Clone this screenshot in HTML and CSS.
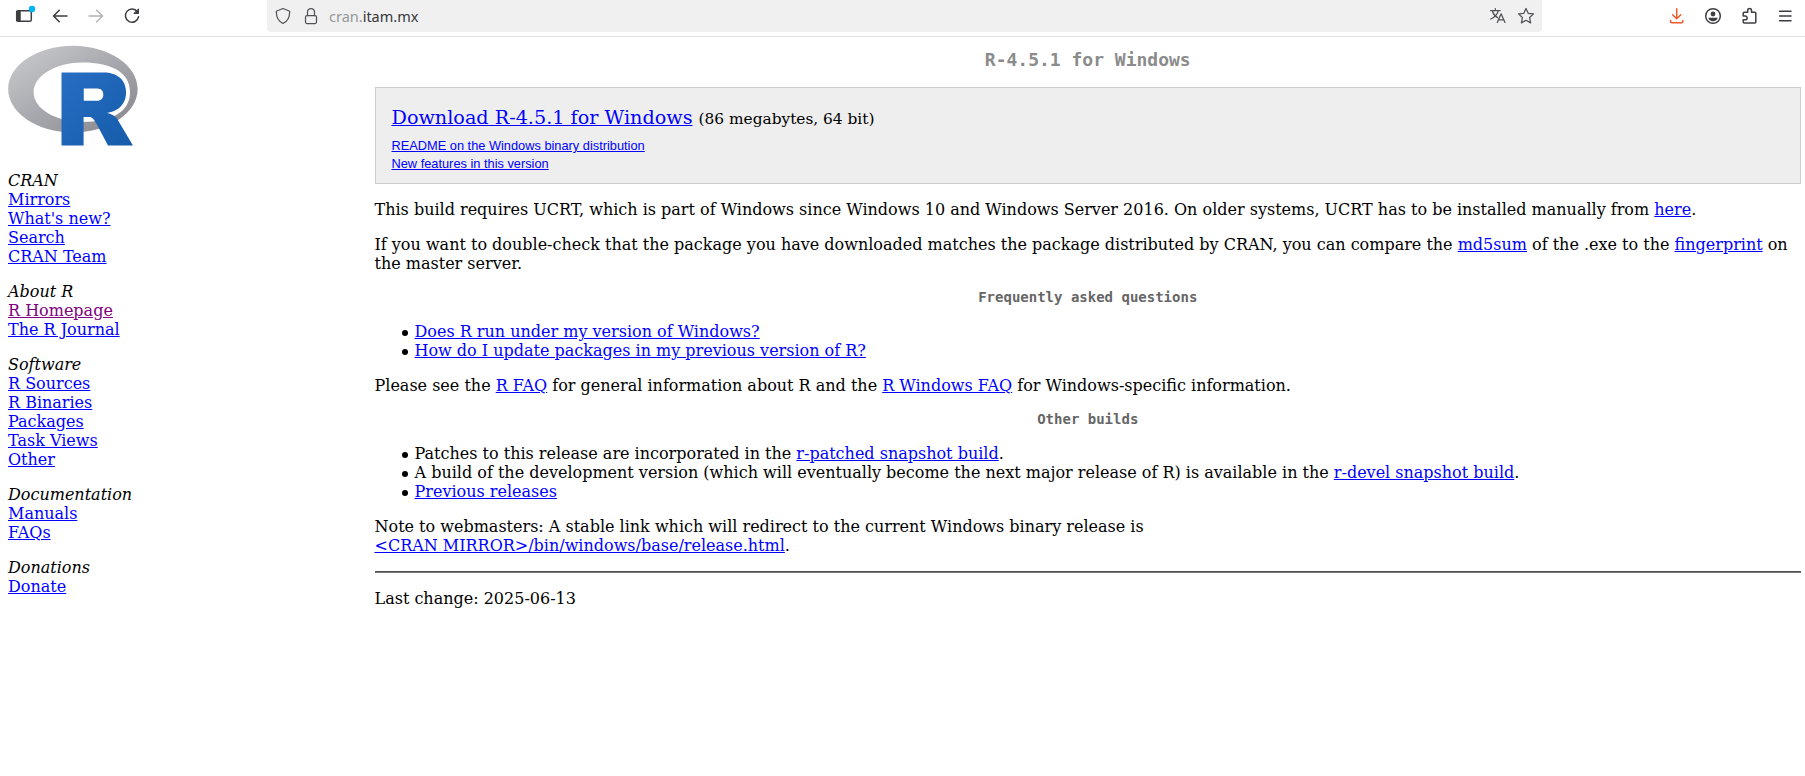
FILE: index.html
```html
<!DOCTYPE html>
<html lang="en">
<head>
<meta charset="utf-8">
<title>R-4.5.1 for Windows</title>
<link rel="stylesheet" href="styles.css">
</head>
<body>
<header class="toolbar">
  <div class="nav-buttons">
    <svg class="icon" viewBox="0 0 20 20"><rect x="2.7" y="4.7" width="14.6" height="10.6" rx="1.6"/><path class="solid" d="M3 5h3.2v10H3z"/><circle class="notice" cx="18" cy="3" r="3.2"/></svg>
    <svg class="icon" viewBox="0 0 20 20"><path d="M17 10H3.8M9.3 4.2 3.5 10l5.8 5.8"/></svg>
    <svg class="icon dim" viewBox="0 0 20 20"><path d="M3 10h13.2M10.7 4.2l5.8 5.8-5.8 5.8"/></svg>
    <svg class="icon" viewBox="0 0 20 20"><path d="M15.400 5.800A6.600 6.600 0 1 0 16.500 10.800"/><path class="solid" d="M16.500 3.200v4.300h-4.300z"/></svg>
  </div>
  <div class="address">
    <svg class="icon thin" viewBox="0 0 20 20"><path d="M10 2.500 16.200 5q.5.300.5.800c0 5.500-2.200 9.600-6.700 11.700C5.500 15.400 3.300 11.300 3.300 5.800q0-.5.500-.8z"/></svg>
    <svg class="icon thin lock" viewBox="0 0 20 20"><rect x="4.500" y="9.500" width="11" height="8" rx="1.500"/><path d="M6.500 9.500V6a3.500 3.500 0 0 1 7 0v3.500"/></svg>
    <span class="url"><span class="sub">cran.</span>itam.mx</span>
    <svg class="icon thin translate" viewBox="0 0 20 20"><path d="M2.500 4.600h9.600M7.300 2.600v2M10.300 4.800C9.300 8.300 6.500 11.300 2.800 13M4.500 5.200c.8 2.700 2.500 4.900 5.200 6.600M9.300 16.400l3.800-8.600 3.900 8.600M10.700 13.800h4.900"/></svg>
    <svg class="icon thin" viewBox="0 0 20 20"><path d="M10 2.500 12.200 7.300l5.300.6-3.900 3.600 1 5.400L10 14.300l-4.600 2.600 1-5.400-3.900-3.600 5.300-.6z"/></svg>
  </div>
  <div class="tools">
    <svg class="icon download" viewBox="0 0 20 20"><path d="M9.700 2.800v9.900M5.600 8.700l4.100 4.100 4.100-4.100M3.500 14.500v.7q0 1.500 1.500 1.500h9.400q1.500 0 1.500-1.500v-.7"/></svg>
    <svg class="icon" viewBox="0 0 20 20"><circle cx="10" cy="10" r="7.300"/><circle class="solid flat" cx="10" cy="8" r="2.400"/><path class="solid flat" d="M5.300 11.700h9.400c-.3 2.200-2.200 3.600-4.700 3.600s-4.400-1.400-4.700-3.600z"/></svg>
    <svg class="icon" viewBox="0 0 20 20"><path d="M4.200 9V7.300q0-1 1-1h3.500V4.500a1.900 1.900 0 0 1 3.800 0v1.800h3.300q1 0 1 1v8.800q0 1-1 1H5.200q-1 0-1-1v-2.300h2a1.900 1.900 0 0 0 0-3.800H4.200z"/></svg>
    <svg class="icon" viewBox="0 0 20 20"><path d="M4.500 5.300h11.500M4.500 10h11.500M4.500 14.700h11.500"/></svg>
  </div>
</header>
<div class="page">
  <nav class="sidebar">
    <svg class="logo" viewBox="0 0 724 561">
      <defs>
        <linearGradient id="ring" x1="0" y1="0" x2="1" y2="1"><stop offset="0" stop-color="#cbced0"/><stop offset="1" stop-color="#84838b"/></linearGradient>
        <linearGradient id="letter" x1="0" y1="0" x2="1" y2="1"><stop offset="0" stop-color="#276dc3"/><stop offset="1" stop-color="#165caa"/></linearGradient>
      </defs>
      <path fill="url(#ring)" fill-rule="evenodd" d="M361.500 486C162.300 486 .9 377.800.9 244.500S162.300 3 361.500 3 722 111.100 722 244.500 560.600 486 361.500 486zM416.600 97.400c-151.300 0-274 73.900-274 165.100s122.700 165.100 274 165.100 263.100-50.600 263.100-165.100S568 97.400 416.600 97.400z"/>
      <path fill="url(#letter)" fill-rule="evenodd" d="M550 377s21.800 6.600 34.500 13c4.400 2.200 12 6.700 17.500 12.500 5.400 5.700 8 11.500 8 11.500l86 145H557l-65-122s-13.300-22.900-21.500-29.500c-6.800-5.500-9.700-7.500-16.500-7.500h-33v159H298V153h247s112.500 2 112.500 109S550 377 550 377zM496.500 241H422v69h74.500s34.500-.1 34.500-35.100c0-35.700-34.500-33.900-34.500-33.900z"/>
    </svg>
    <div class="group"><em>CRAN</em><a href="#">Mirrors</a><a href="#">What's new?</a><a href="#">Search</a><a href="#">CRAN Team</a></div>
    <div class="group"><em>About R</em><a href="#" class="visited">R Homepage</a><a href="#">The R Journal</a></div>
    <div class="group"><em>Software</em><a href="#">R Sources</a><a href="#">R Binaries</a><a href="#">Packages</a><a href="#">Task Views</a><a href="#">Other</a></div>
    <div class="group"><em>Documentation</em><a href="#">Manuals</a><a href="#">FAQs</a></div>
    <div class="group"><em>Donations</em><a href="#">Donate</a></div>
  </nav>
  <main class="content">
    <h1>R-4.5.1 for Windows</h1>
    <section class="box">
      <p class="get"><a href="#">Download R-4.5.1 for Windows</a> <span class="size">(86 megabytes, 64 bit)</span></p>
      <p class="note"><a href="#">README on the Windows binary distribution</a></p>
      <p class="note"><a href="#">New features in this version</a></p>
    </section>
    <p>This build requires UCRT, which is part of Windows since Windows 10 and Windows Server 2016. On older systems, UCRT has to be installed manually from <a href="#">here</a>.</p>
    <p>If you want to double-check that the package you have downloaded matches the package distributed by CRAN, you can compare the <a href="#">md5sum</a> of the .exe to the <a href="#">fingerprint</a> on the master server.</p>
    <h2>Frequently asked questions</h2>
    <ul>
      <li><a href="#">Does R run under my version of Windows?</a></li>
      <li><a href="#">How do I update packages in my previous version of R?</a></li>
    </ul>
    <p>Please see the <a href="#">R FAQ</a> for general information about R and the <a href="#">R Windows FAQ</a> for Windows-specific information.</p>
    <h2>Other builds</h2>
    <ul>
      <li>Patches to this release are incorporated in the <a href="#">r-patched snapshot build</a>.</li>
      <li>A build of the development version (which will eventually become the next major release of R) is available in the <a href="#">r-devel snapshot build</a>.</li>
      <li><a href="#">Previous releases</a></li>
    </ul>
    <p>Note to webmasters: A stable link which will redirect to the current Windows binary release is<br><a href="#">&lt;CRAN MIRROR&gt;/bin/windows/base/release.html</a>.</p>
    <hr>
    <p>Last change: 2025-06-13</p>
  </main>
</div>
</body>
</html>
```
FILE: styles.css
```css
* { box-sizing: border-box; }
body {
  margin: 0;
  background: #fff;
  color: #000;
  font: 16px/19px "DejaVu Serif", serif;
}
a { color: #00f; }
a.visited { color: #800080; }

.toolbar {
  display: flex;
  align-items: flex-start;
  height: 37px;
  border-bottom: 1px solid #e0e0e1;
}
.nav-buttons { display: flex; gap: 16px; width: 267px; padding: 6px 0 0 14px; }
.address {
  display: flex;
  align-items: flex-start;
  width: 1275px;
  height: 32px;
  padding: 6px 6px 0;
  background: #f0f0f1;
  border-radius: 0 0 4px 4px;
}
.tools { display: flex; gap: 16px; padding: 6px 0 0 125px; }
.icon {
  flex: none;
  width: 20px;
  height: 20px;
  fill: none;
  stroke: #3e3e42;
  stroke-width: 1.5;
  stroke-linecap: round;
  stroke-linejoin: round;
  overflow: visible;
}
.icon.thin { stroke-width: 1.25; stroke: #525256; }
.icon.dim { stroke: #b4b4b6; }
.icon.download { stroke: #ee5b28; }
.lock { margin-left: 8px; }
.translate { margin: 0 8px 0 auto; }
.solid { fill: #3e3e42; stroke-width: 1; }
.flat { stroke: none; }
.notice { fill: #00b3f4; stroke: none; }
.url {
  margin-left: 8px;
  font: 14.500px/21px "Noto Sans", sans-serif;
  color: #36363a;
}
.sub { color: #97979b; }

.page { display: flex; }
.sidebar { width: 374.500px; padding: 8px 0 0 8px; }
.logo { display: block; width: 130px; height: 101px; margin-bottom: 25px; }
.group { display: flex; flex-direction: column; align-items: flex-start; margin-bottom: 16px; }
.content { width: 1426.500px; padding-top: 12px; }
.content p { margin: 16px 0; }
h1, h2 { text-align: center; font-family: "DejaVu Sans Mono", monospace; }
h1 { margin: 0; font-size: 18px; line-height: 21px; color: #8b8b8b; }
.box { height: 97px; margin-top: 17px; padding: 18px 16px 0; background: #eee; border: 1px solid #ccc; }
.content .get { margin: 0 0 6px; font-size: 19.200px; line-height: 23px; }
.size { font-size: 15.360px; }
.content .note { margin: 0; font: 12.800px/18px "Liberation Sans", sans-serif; }
h2 { margin: 16px 0; font-size: 14px; line-height: 17px; color: #666; }
ul { margin: 16px 0; padding-left: 40px; list-style: none; }
li { position: relative; }
li::before {
  content: "";
  position: absolute;
  top: 8px;
  left: -13px;
  width: 6px;
  height: 6px;
  border-radius: 50%;
  background: #000;
}
hr { height: 2px; margin: 15px 0 16px; border: 0; border-top: 1px solid #505050; background: #777; }
```
